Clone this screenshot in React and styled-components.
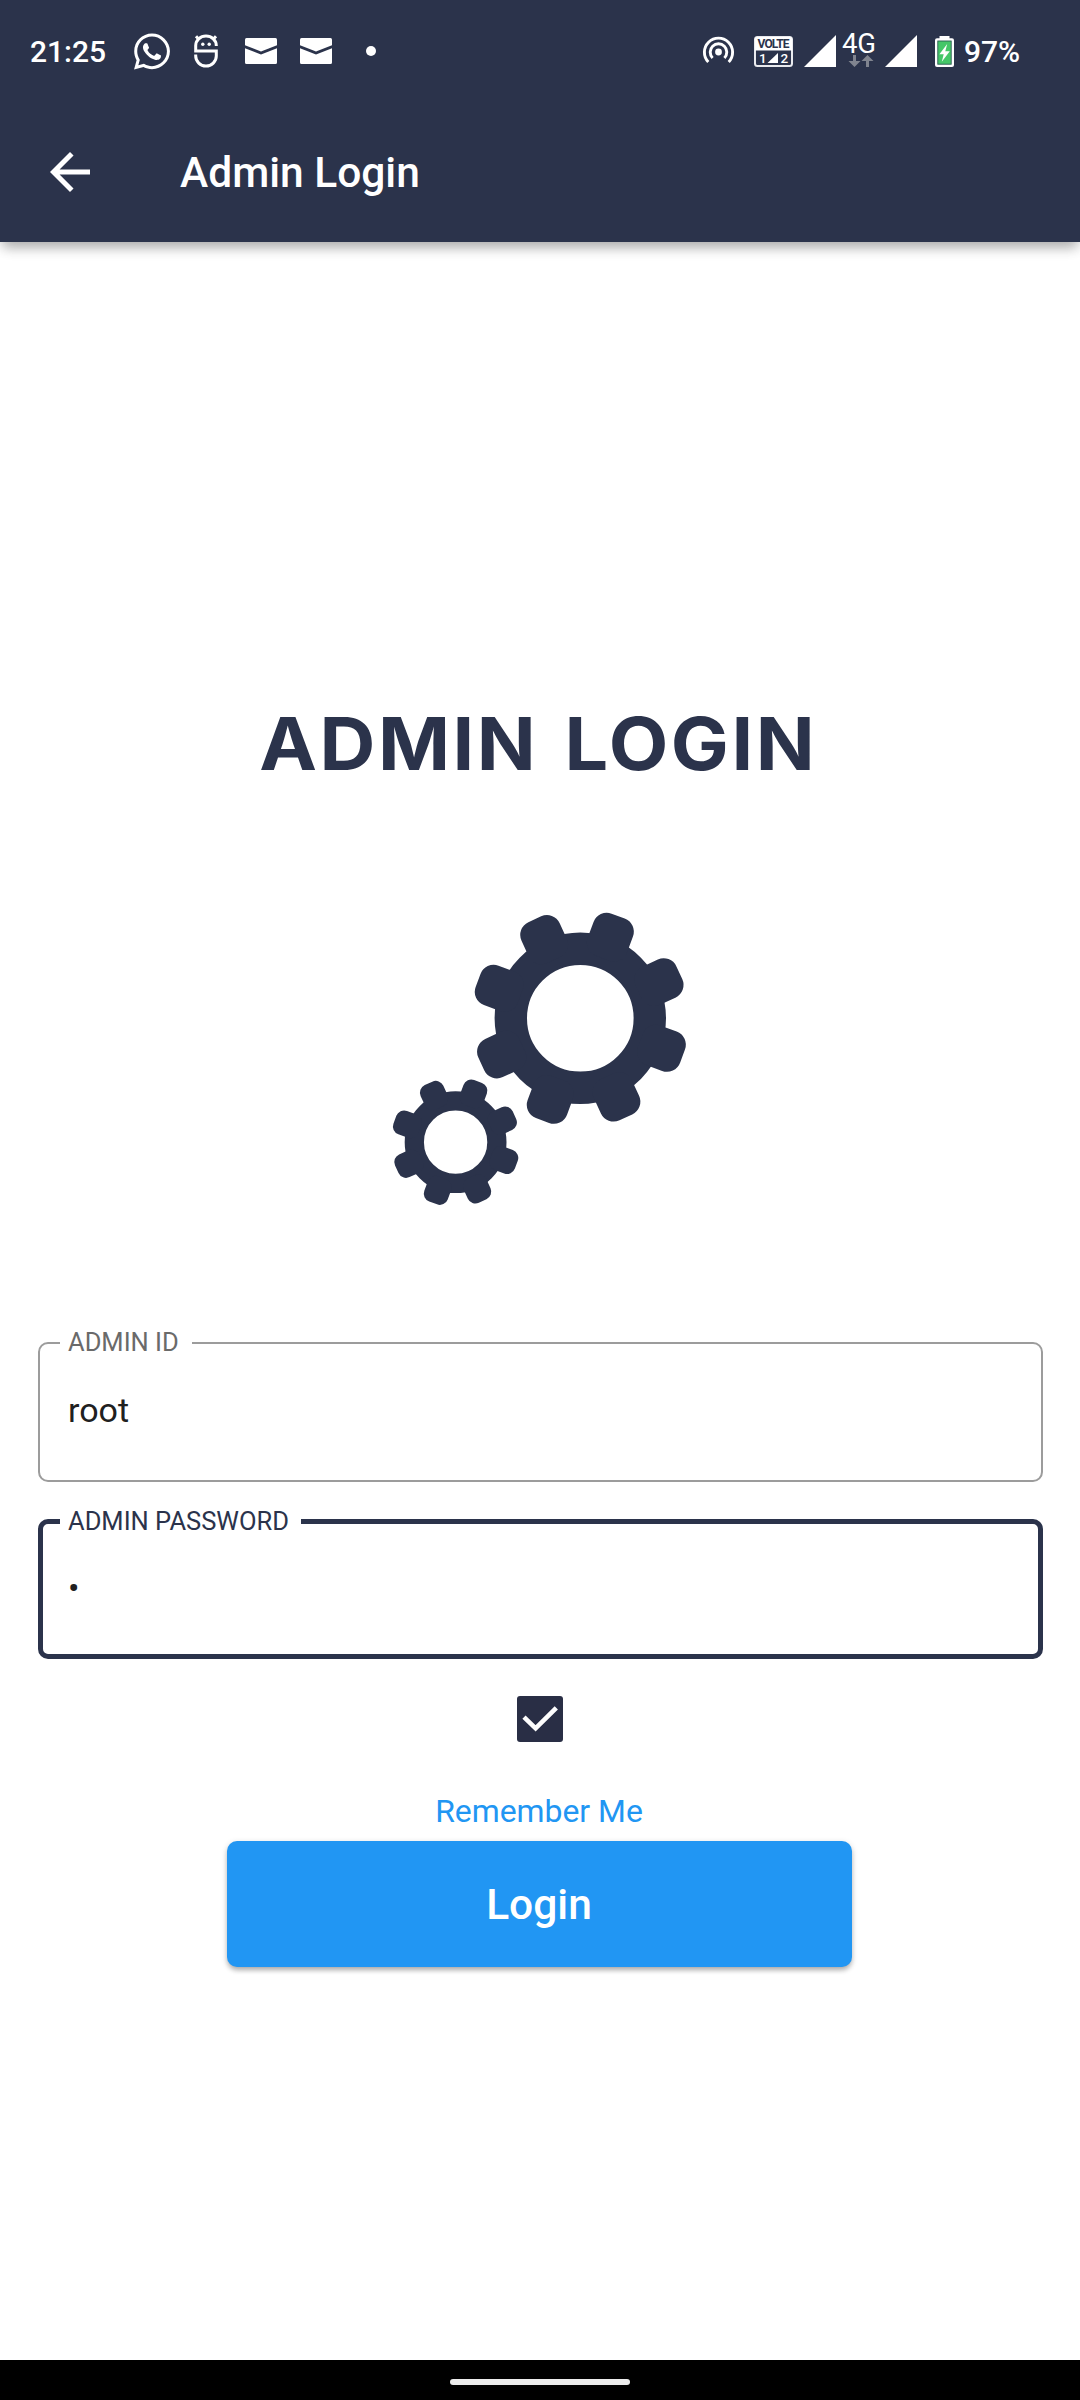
import React from "react";
import styled, { createGlobalStyle } from "styled-components";
import { FaWhatsapp } from "react-icons/fa";

const NAVY = "#2b334b";
const BLUE = "#2196f3";

const GlobalStyle = createGlobalStyle`
  * { box-sizing: border-box; }
  body { margin: 0; background: #fff; font-family: Roboto, sans-serif; }
`;

const Screen = styled.div`
  width: 1080px;
  height: 2400px;
  display: flex;
  flex-direction: column;
  background: #fff;
  overflow: hidden;
`;

const Header = styled.header`
  height: 242px;
  flex: none;
  background: ${NAVY};
  color: #fff;
  box-shadow: 0 10px 12px -4px rgba(0, 0, 0, 0.2), 0 4px 12px rgba(0, 0, 0, 0.17);
`;

const StatusBar = styled.div`
  height: 102px;
  padding: 0 60px 0 30px;
  display: flex;
  align-items: center;
  justify-content: space-between;
`;

const StatusGroup = styled.div`
  display: flex;
  align-items: center;
`;

const StatusText = styled.span`
  font-size: 30px;
  font-weight: 500;
  line-height: 36px;
  padding-top: 2px;
  margin-left: ${(p) => p.$gap || 0}px;
  width: ${(p) => p.$width}px;
  white-space: nowrap;
`;

const Icon = styled.svg`
  display: block;
  flex: none;
  overflow: visible;
  margin-left: ${(p) => p.$gap || 0}px;
`;

const ChatIcon = styled(FaWhatsapp)`
  display: block;
  width: 36px;
  height: 41px;
  margin: 0 0 0 27px;
`;

const Network = styled.div`
  width: 49px;
  height: 34px;
  display: flex;
  flex-direction: column;
  align-items: center;
`;

const NetworkLabel = styled.span`
  margin-right: 3px;
  font-size: 27.5px;
  font-weight: 400;
  line-height: 20px;
  height: 21px;
`;

const AppBar = styled.div`
  height: 140px;
  display: flex;
  align-items: center;
  padding-left: 40px;
`;

const AppTitle = styled.h1`
  margin: 0 0 0 80px;
  padding-top: 2px;
  font-size: 42.5px;
  line-height: 50px;
  font-weight: 500;
`;

const Main = styled.main`
  flex: 1;
  display: flex;
  flex-direction: column;
  align-items: center;
  padding-top: 456px;
`;

const Heading = styled.h2`
  margin: 0 3px 0 0;
  height: 90px;
  line-height: 92px;
  font-family: Inter, sans-serif;
  font-size: 73px;
  font-weight: 700;
  letter-spacing: 2.4px;
  word-spacing: 5px;
  color: ${NAVY};
  white-space: nowrap;
  transform: scaleX(1.06);
`;

const Gears = styled.svg`
  display: block;
  margin-top: 102px;
`;

const Form = styled.form`
  width: 100%;
  padding: 0 37px;
  margin-top: 108px;
  display: flex;
  flex-direction: column;
  align-items: center;
`;

const Field = styled.fieldset`
  width: 1005px;
  height: ${(p) => (p.$focused ? 153 : 154)}px;
  margin: 0 0 ${(p) => (p.$focused ? 37 : 24)}px;
  padding: 0 0 0 ${(p) => (p.$focused ? 17 : 20)}px;
  border: ${(p) => (p.$focused ? `5px solid ${NAVY}` : "2px solid #9c9c9c")};
  border-radius: 10px;
`;

const Label = styled.legend`
  height: 30px;
  width: ${(p) => p.$width}px;
  padding: 0 0 0 8.5px;
  font-size: 25.5px;
  line-height: ${(p) => (p.$focused ? 30 : 28)}px;
  white-space: nowrap;
  color: ${(p) => (p.$focused ? NAVY : "#6a6a6a")};
`;

const Value = styled.div`
  padding: 32px 0 0 8.5px;
  font-size: 34px;
  line-height: 40px;
  color: #202020;
`;

const CheckBox = styled.div`
  width: 46px;
  height: 46px;
  border-radius: 3px;
  background: #292e45;
`;

const Remember = styled.label`
  margin: 51px 2px 0 0;
  height: 36px;
  font-size: 31.9px;
  line-height: 36px;
  color: ${BLUE};
`;

const LoginButton = styled.button`
  margin: 12px 1px 0 0;
  width: 625px;
  height: 126px;
  border: 0;
  padding: 1px 1px 0 0;
  border-radius: 10px;
  background: ${BLUE};
  color: #fff;
  font: 500 42.5px/50px Roboto, sans-serif;
  box-shadow: 0 4px 5px -1px rgba(0, 0, 0, 0.22), 0 2px 6px rgba(0, 0, 0, 0.18);
`;

const NavBar = styled.nav`
  height: 40px;
  flex: none;
  background: #000;
  display: flex;
  justify-content: center;
  padding-top: 19px;
`;

const NavHandle = styled.div`
  width: 180px;
  height: 6px;
  border-radius: 3px;
  background: #ececec;
`;

function MailIcon({ gap }) {
  return (
    <Icon $gap={gap} width="32" height="26" viewBox="0 0 32 26">
      <path fill="#fff" d="M1.5 0h29Q32 0 32 1.5V7.2L16 13.6 0 7.2V1.5Q0 0 1.5 0Z" />
      <path fill="#fff" d="M0 10.2 16 16.6 32 10.2V24.5Q32 26 30.5 26h-29Q0 26 0 24.5Z" />
    </Icon>
  );
}

function SignalIcon({ gap }) {
  return (
    <Icon $gap={gap} width="32" height="32" viewBox="0 0 32 32">
      <path fill="#fff" d="M32 0V32H0Z" />
    </Icon>
  );
}

function Gear({ x, y, scale }) {
  const teeth = [0, 1, 2, 3, 4, 5, 6, 7];
  return (
    <g transform={`translate(${x} ${y}) scale(${scale})`} fill={NAVY}>
      <circle r="69.5" fill="none" stroke={NAVY} strokeWidth="32.4" />
      {teeth.map((i) => (
        <rect key={i} x="-21" y="-109" width="42" height="45" rx="14" transform={`rotate(${20.3 + i * 45})`} />
      ))}
    </g>
  );
}

export default function App() {
  return (
    <Screen>
      <GlobalStyle />
      <Header>
        <StatusBar>
          <StatusGroup>
            <StatusText $width={77}>21:25</StatusText>
            <ChatIcon />
            <Icon $gap={24} width="24" height="34" viewBox="0 0 24 34" fill="none" stroke="#fff" strokeWidth="3">
              <path d="M22.3 12V11.5A10.3 9.5 0 0 0 1.7 11.5V17H22.3V22A10.3 10 0 0 1 1.7 22V20.5" />
              <path d="M2 2.2 5 5.5M22 2.2 19 5.5" />
              <circle cx="8.8" cy="10.3" r="1.7" fill="#fff" stroke="none" />
              <circle cx="15.2" cy="10.3" r="1.7" fill="#fff" stroke="none" />
            </Icon>
            <MailIcon gap={27} />
            <MailIcon gap={23} />
            <Icon $gap={34} width="10" height="10" viewBox="0 0 10 10">
              <circle cx="5" cy="5" r="5" fill="#fff" />
            </Icon>
          </StatusGroup>
          <StatusGroup>
            <Icon width="31" height="32" viewBox="0 0 31 32" fill="none" stroke="#fff" strokeWidth="2.9">
              <circle cx="15.5" cy="17" r="3.4" fill="#fff" stroke="none" />
              <path d="M9.6 22.9A8.3 8.3 0 1 1 21.4 22.9" />
              <path d="M5.3 27A14.1 14.1 0 1 1 25.7 27" />
            </Icon>
            <Icon $gap={20} width="39" height="31" viewBox="0 0 39 31">
              <rect x="1" y="1" width="37" height="29" rx="2.5" fill="none" stroke="#e9eaee" strokeWidth="2" />
              <path d="M1 3Q1 1 3 1H36Q38 1 38 3V14.5H1Z" fill="#fff" />
              <text x="19.5" y="12.2" textAnchor="middle" textLength="32" fontFamily="Roboto" fontWeight="700" fontSize="12" fill={NAVY}>VOLTE</text>
              <text x="5" y="27" fontFamily="Roboto" fontWeight="500" fontSize="13.5" fill="#fff">1</text>
              <path d="M24 17V27H13.5Z" fill="#fff" />
              <text x="26.5" y="27" fontFamily="Roboto" fontWeight="500" fontSize="13.5" fill="#fff">2</text>
            </Icon>
            <SignalIcon gap={11} />
            <Network>
              <NetworkLabel>4G</NetworkLabel>
              <Icon width="26" height="12" viewBox="0 0 26 12" fill="#80848f">
                <path d="M5 0H8V6H12.5L6.5 12 .5 6H5Z" />
                <path d="M18 12H21V6H25.5L19.5 0 13.5 6H18Z" />
              </Icon>
            </Network>
            <SignalIcon />
            <Icon $gap={18} width="19" height="31" viewBox="0 0 19 31">
              <path d="M4.5 0H14.5V3H4.5Z" fill="#fff" />
              <rect x="0" y="2.2" width="19" height="28.8" rx="2" fill="#fff" />
              <rect x="2.8" y="5" width="13.4" height="23.2" fill="#45c768" stroke="#2c5c52" strokeWidth="0.9" />
              <path d="M12.2 8 4.4 18.3H8.7L6.8 25.7 14.8 15.2H10.3Z" fill="#fff" />
            </Icon>
            <StatusText $gap={10} $width={56}>97%</StatusText>
          </StatusGroup>
        </StatusBar>
        <AppBar>
          <Icon width="60" height="60" viewBox="0 0 24 24">
            <path fill="#fff" d="M20 11H7.83l5.59-5.59L12 4l-8 8 8 8 1.41-1.41L7.83 13H20v-2z" />
          </Icon>
          <AppTitle>Admin Login</AppTitle>
        </AppBar>
      </Header>
      <Main>
        <Heading>ADMIN LOGIN</Heading>
        <Gears width="340" height="330" viewBox="370 890 340 330">
          <Gear x={580.3} y={1018.3} scale={1} />
          <Gear x={455.6} y={1142.2} scale={0.594} />
        </Gears>
        <Form>
          <Field>
            <Label $width={132}>ADMIN ID</Label>
            <Value>root</Value>
          </Field>
          <Field $focused>
            <Label $focused $width={241}>ADMIN PASSWORD</Label>
            <Value>•</Value>
          </Field>
          <CheckBox role="checkbox" aria-checked="true">
            <Icon width="46" height="46" viewBox="0 0 46 46" fill="none" stroke="#fdfdfd" strokeWidth="4.6">
              <path d="M7 21.2 18.6 32.4 39.3 11.8" />
            </Icon>
          </CheckBox>
          <Remember>Remember Me</Remember>
          <LoginButton type="button">Login</LoginButton>
        </Form>
      </Main>
      <NavBar>
        <NavHandle />
      </NavBar>
    </Screen>
  );
}
